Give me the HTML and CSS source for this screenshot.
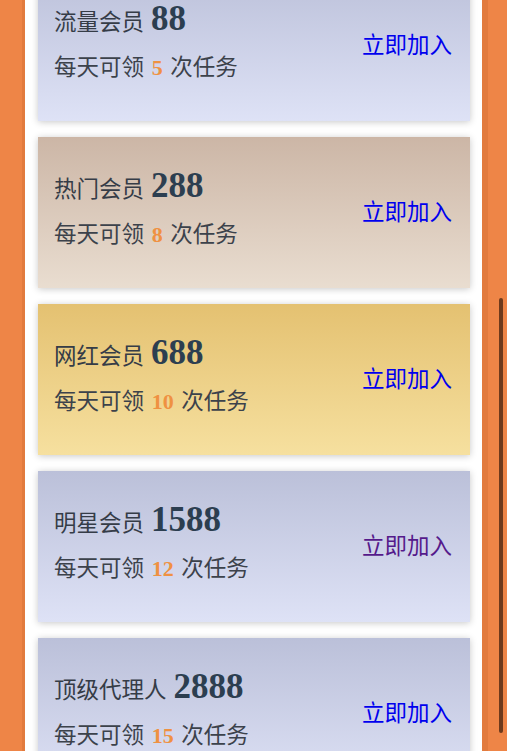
FILE: index.html
```html
<!DOCTYPE html>
<html lang="zh-CN">
<head>
<meta charset="utf-8">
<title>会员</title>
<link rel="stylesheet" href="styles.css">
</head>
<body>
<div class="page">
  <div class="column">
    <div class="list">
      <div class="card card-blue">
        <div class="info">
          <div class="title"><span class="name">流量会员</span><span class="price">88</span></div>
          <div class="desc">每天可领 <b class="count">5</b> 次任务</div>
        </div>
        <a class="join" href="#">立即加入</a>
      </div>
      <div class="card card-brown">
        <div class="info">
          <div class="title"><span class="name">热门会员</span><span class="price">288</span></div>
          <div class="desc">每天可领 <b class="count">8</b> 次任务</div>
        </div>
        <a class="join" href="#">立即加入</a>
      </div>
      <div class="card card-gold">
        <div class="info">
          <div class="title"><span class="name">网红会员</span><span class="price">688</span></div>
          <div class="desc">每天可领 <b class="count">10</b> 次任务</div>
        </div>
        <a class="join" href="#">立即加入</a>
      </div>
      <div class="card card-blue">
        <div class="info">
          <div class="title"><span class="name">明星会员</span><span class="price">1588</span></div>
          <div class="desc">每天可领 <b class="count">12</b> 次任务</div>
        </div>
        <a class="join visited" href="#">立即加入</a>
      </div>
      <div class="card card-blue">
        <div class="info">
          <div class="title"><span class="name">顶级代理人</span><span class="price">2888</span></div>
          <div class="desc">每天可领 <b class="count">15</b> 次任务</div>
        </div>
        <a class="join" href="#">立即加入</a>
      </div>
    </div>
  </div>
  <div class="scrollbar"><div class="thumb"></div></div>
</div>
</body>
</html>
```

FILE: styles.css
```css
html, body {
  margin: 0;
  padding: 0;
  height: 100%;
  overflow: hidden;
}
body {
  background: #ee8547;
  font-family: "Liberation Serif", "Noto Sans CJK SC", serif;
}
.page {
  position: relative;
  height: 751px;
  overflow: hidden;
}
.column {
  margin-left: 22px;
  width: 457px;
  border-left: 3px solid #e27b3e;
  border-right: 6px solid #e27b3e;
  background: #ffffff;
  min-height: 100%;
}
.list {
  display: flex;
  flex-direction: column;
  gap: 16px;
  padding: 0 12px 0 13px;
  margin-top: -30px;
}
.card {
  height: 151px;
  display: flex;
  align-items: center;
  justify-content: space-between;
  padding: 0 18px 0 16px;
  box-shadow: 0 1px 7px rgba(0, 0, 0, 0.22);
}
.card-blue {
  background: linear-gradient(to bottom, #bbc0d9, #dee2f6);
}
.card-brown {
  background: linear-gradient(to bottom, #ccb6a6, #e9ddd0);
}
.card-gold {
  background: linear-gradient(to bottom, #e4c171, #f6e09f);
}
.info {
  display: flex;
  flex-direction: column;
  margin-top: -9px;
}
.title {
  display: flex;
  align-items: baseline;
  gap: 7px;
  height: 54px;
}
.name {
  font-family: "Noto Sans CJK SC", sans-serif;
  font-size: 22.5px;
  color: #353c47;
}
.price {
  font-family: "Liberation Serif", serif;
  font-weight: bold;
  font-size: 35px;
  color: #2c3e50;
}
.desc {
  font-family: "Liberation Serif", "Noto Sans CJK SC", serif;
  font-size: 22.5px;
  word-spacing: 2px;
  color: #3c424b;
  line-height: 30px;
}
.count {
  font-family: "Liberation Serif", serif;
  font-weight: bold;
  font-size: 22px;
  color: #ef9142;
}
.join {
  font-family: "Noto Sans CJK SC", sans-serif;
  font-size: 22.5px;
  color: #0000ee;
  text-decoration: none;
  margin-top: -5px;
}
.join.visited {
  color: #551a8b;
}
.scrollbar {
  position: absolute;
  top: 0;
  right: 4px;
  width: 4px;
  height: 751px;
}
.thumb {
  position: absolute;
  top: 298px;
  left: 0;
  width: 4px;
  height: 435px;
  border-radius: 2px;
  background: #6e3a1c;
}
```
